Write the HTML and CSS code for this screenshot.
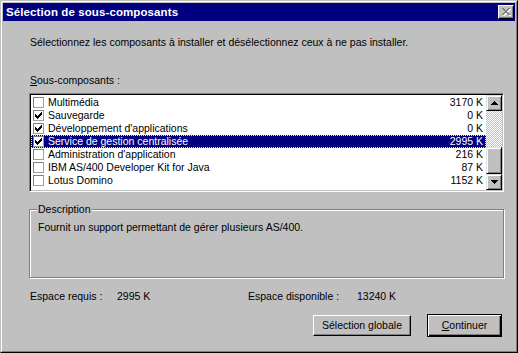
FILE: index.html
```html
<!DOCTYPE html>
<html lang="fr">
<head>
<meta charset="utf-8">
<title>Sélection de sous-composants</title>
<link rel="stylesheet" href="styles.css">
</head>
<body>
<div class="window">
  <div class="frame">
    <div class="titlebar">
      <span class="title">Sélection de sous-composants</span>
      <span class="close" aria-label="Fermer">
        <svg width="9" height="8" viewBox="0 0 9 8" shape-rendering="crispEdges">
          <path fill="#fff" transform="translate(1,1)" d="M0 0H2V1H3V2H5V1H6V0H8V1H7V2H6V3H5V4H6V5H7V6H8V7H6V6H5V5H3V6H2V7H0V6H1V5H2V4H3V3H2V2H1V1H0z"/>
          <path fill="#808080" d="M0 0H2V1H3V2H5V1H6V0H8V1H7V2H6V3H5V4H6V5H7V6H8V7H6V6H5V5H3V6H2V7H0V6H1V5H2V4H3V3H2V2H1V1H0z"/>
        </svg>
      </span>
    </div>
    <div class="content">
      <p class="intro">Sélectionnez les composants à installer et désélectionnez ceux à ne pas installer.</p>
      <p class="list-label"><u>S</u>ous-composants :</p>
      <div class="listbox">
        <ul class="items">
          <li class="item"><span class="check"></span><span class="name">Multimédia</span><span class="size">3170 K</span></li>
          <li class="item"><span class="check"><svg width="7" height="7" viewBox="0 0 7 7" shape-rendering="crispEdges"><path d="M0 2H1V3H2V4H3V3H4V2H5V1H6V0H7V3H6V4H5V5H4V6H3V7H2V6H1V5H0Z"/></svg></span><span class="name">Sauvegarde</span><span class="size">0 K</span></li>
          <li class="item"><span class="check"><svg width="7" height="7" viewBox="0 0 7 7" shape-rendering="crispEdges"><path d="M0 2H1V3H2V4H3V3H4V2H5V1H6V0H7V3H6V4H5V5H4V6H3V7H2V6H1V5H0Z"/></svg></span><span class="name">Développement d'applications</span><span class="size">0 K</span></li>
          <li class="item selected"><span class="check"><svg width="7" height="7" viewBox="0 0 7 7" shape-rendering="crispEdges"><path d="M0 2H1V3H2V4H3V3H4V2H5V1H6V0H7V3H6V4H5V5H4V6H3V7H2V6H1V5H0Z"/></svg></span><span class="name">Service de gestion centralisée</span><span class="size">2995 K</span></li>
          <li class="item"><span class="check"></span><span class="name">Administration d'application</span><span class="size">216 K</span></li>
          <li class="item"><span class="check"></span><span class="name">IBM AS/400 Developer Kit for Java</span><span class="size">87 K</span></li>
          <li class="item"><span class="check"></span><span class="name">Lotus Domino</span><span class="size">1152 K</span></li>
        </ul>
        <div class="scrollbar">
          <span class="sb-btn">
            <svg width="7" height="4" viewBox="0 0 7 4" shape-rendering="crispEdges"><path d="M3 0H4V1H5V2H6V3H7V4H0V3H1V2H2V1H3Z"/></svg>
          </span>
          <span class="sb-track"></span>
          <span class="sb-thumb"></span>
          <span class="sb-rest"></span>
          <span class="sb-btn">
            <svg width="7" height="4" viewBox="0 0 7 4" shape-rendering="crispEdges"><path d="M0 0H7V1H6V2H5V3H4V4H3V3H2V2H1V1H0Z"/></svg>
          </span>
        </div>
      </div>
      <div class="group">
        <span class="group-label">Description</span>
        <p class="group-text">Fournit un support permettant de gérer plusieurs AS/400.</p>
      </div>
      <div class="space">
        <span>Espace requis :</span>
        <span>2995 K</span>
        <span>Espace disponible :</span>
        <span>13240 K</span>
      </div>
      <div class="buttons">
        <button class="btn">Sélection globale</button>
        <button class="btn default"><span><u>C</u>ontinuer</span></button>
      </div>
    </div>
  </div>
</div>
</body>
</html>
```
FILE: styles.css
```css
* { box-sizing: border-box; }
html, body { margin: 0; padding: 0; background: #c0c0c0; }
body {
  font-family: "Liberation Sans", Arial, sans-serif;
  font-size: 10.5px;
  line-height: 13px;
  color: #000;
}
p { margin: 0; }

.window {
  width: 518px;
  height: 353px;
  border: 1px solid;
  border-color: #c0c0c0 #000 #000 #c0c0c0;
  background: #c0c0c0;
}
.frame {
  height: 100%;
  border: 1px solid;
  border-color: #fff #808080 #808080 #fff;
  padding: 1px;
  display: flex;
  flex-direction: column;
}
.titlebar {
  height: 18px;
  background: #000080;
  display: flex;
  align-items: center;
  justify-content: space-between;
  padding: 0 1px 0 3px;
}
.title {
  color: #fff;
  font-weight: bold;
  font-size: 11.5px;
  letter-spacing: 0.1px;
}
.close {
  width: 16px;
  height: 14px;
  background: #c0c0c0;
  border: 1px solid;
  border-color: #fff #000 #000 #fff;
  box-shadow: inset -1px -1px #808080;
  display: flex;
  align-items: center;
  justify-content: center;
  padding: 0 0 1px 1px;
}
.close svg { display: block; }

.content {
  flex: 1;
  padding: 15px 13px 0 26px;
  display: flex;
  flex-direction: column;
}
.intro { padding-left: 1px; }
.list-label { margin-top: 25px; padding-left: 1px; }
.list-label u, .default u { text-decoration: underline; text-underline-offset: 1px; }

.listbox {
  margin-top: 6px;
  width: 475px;
  height: 99px;
  border: 1px solid;
  border-color: #808080 #fff #fff #808080;
  box-shadow: inset 1px 1px #000, inset -1px -1px #c0c0c0;
  padding: 1px;
  background: #fff;
  display: flex;
}
.items {
  list-style: none;
  margin: 0;
  padding: 1px 0 0;
  flex: 1;
}
.item {
  height: 13px;
  display: flex;
  align-items: center;
  padding: 0 3px 0 2px;
}
.check {
  width: 11px;
  height: 11px;
  border: 1px solid;
  border-color: #808080 #a0a0a0 #a0a0a0 #808080;
  background: #fff;
  display: flex;
  align-items: center;
  justify-content: center;
  margin-right: 4px;
}
.check svg { display: block; }
.name { flex: 1; }
.size { text-align: right; }
.selected {
  background: #000080;
  color: #fff;
  outline: 1px dotted #ffff00;
  outline-offset: -1px;
}

.scrollbar {
  width: 16px;
  display: flex;
  flex-direction: column;
}
.sb-btn, .sb-thumb {
  background: #c0c0c0;
  border: 1px solid;
  border-color: #dfdfdf #000 #000 #dfdfdf;
  box-shadow: inset 1px 1px #fff, inset -1px -1px #808080;
}
.sb-btn {
  height: 16px;
  display: flex;
  align-items: center;
  justify-content: center;
}
.sb-btn svg { display: block; }
.sb-track {
  height: 36px;
  background: repeating-conic-gradient(#fff 0 25%, #c0c0c0 0 50%) 0 0 / 2px 2px;
}
.sb-thumb { height: 27px; }
.sb-rest { flex: 1; background: #c0c0c0; }

.group {
  position: relative;
  margin-top: 17px;
  width: 475px;
  height: 69px;
  border: 1px solid #808080;
  box-shadow: inset 1px 1px #fff, 1px 1px #fff;
  padding: 11px 0 0 8px;
}
.group-label {
  position: absolute;
  left: 7px;
  top: -7px;
  padding: 0 1px;
  background: #c0c0c0;
}

.space {
  margin-top: 12px;
  display: grid;
  grid-template-columns: 87px 131px 109px auto;
  padding-left: 1px;
}

.buttons {
  margin-top: 11px;
  display: flex;
  justify-content: flex-end;
  align-items: center;
  gap: 16px;
}
.btn {
  font: inherit;
  color: #000;
  background: #c0c0c0;
  height: 21px;
  border: 1px solid;
  border-color: #fff #000 #000 #fff;
  box-shadow: inset -1px -1px #808080;
  padding: 0;
  width: 98px;
}
.btn.default {
  width: 75px;
  height: 23px;
  border: 1px solid #000;
  box-shadow: inset 1px 1px #fff, inset -1px -1px #000, inset -2px -2px #808080;
}
```
